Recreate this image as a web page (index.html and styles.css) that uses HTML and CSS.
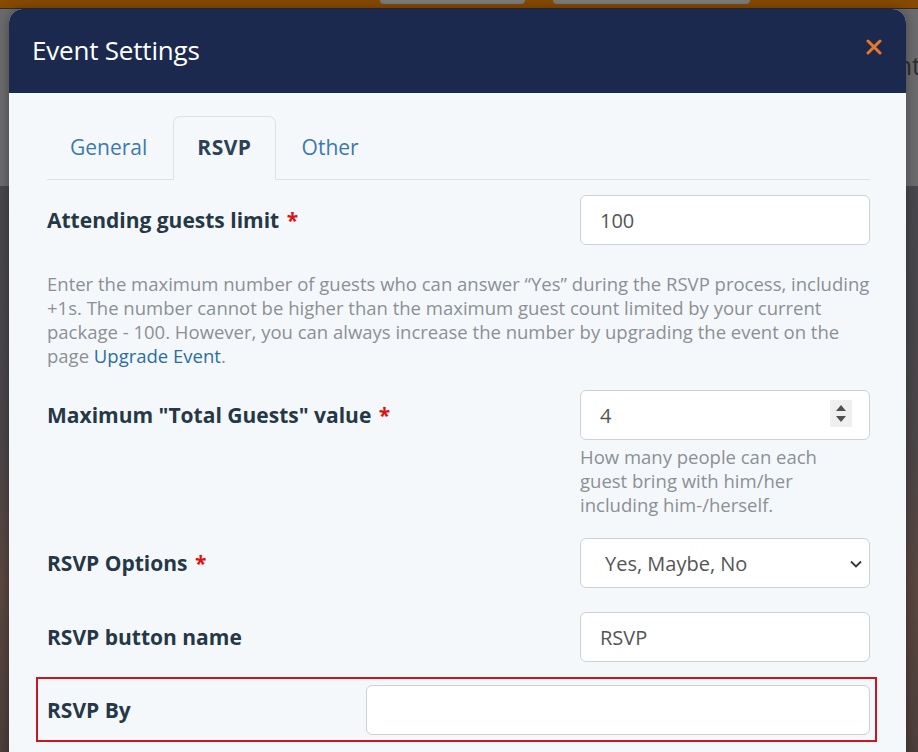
FILE: index.html
```html
<!DOCTYPE html>
<html lang="en">

<head>
    <meta charset="UTF-8">
    <meta name="viewport" content="width=device-width, initial-scale=1.0">
    <title>Event Settings</title>
    <link rel="stylesheet" href="styles.css">
</head>

<body>
    <div class="page">
        <div class="topbar">
            <span class="pill pill-a"></span>
            <span class="pill pill-b"></span>
        </div>
        <div class="page-head">
            <span class="page-title">nt</span>
        </div>
        <div class="page-photo"></div>
    </div>

    <div class="modal">
        <div class="modal-header">
            <h2 class="modal-title">Event Settings</h2>
            <button class="close" type="button" aria-label="Close">
                <svg viewBox="0 0 16 16" width="16" height="16">
                    <path d="M 2,2 14,14 M 14,2 2,14"></path>
                </svg>
            </button>
        </div>

        <div class="modal-body">
            <ul class="tabs">
                <li class="tab"><a href="#">General</a></li>
                <li class="tab active"><a href="#">RSVP</a></li>
                <li class="tab"><a href="#">Other</a></li>
            </ul>

            <div class="form-row row-limit">
                <label class="form-label">Attending guests limit <span class="req">*</span></label>
                <div class="form-field">
                    <input class="form-control" type="text" value="100">
                </div>
            </div>
            <p class="help help-wide">Enter the maximum number of guests who can answer “Yes” during the RSVP process, including +1s. The number cannot be higher than the maximum guest count limited by your current package - 100. However, you can always increase the number by upgrading the event on the page <a href="#">Upgrade Event</a>.</p>

            <div class="form-row row-top">
                <label class="form-label">Maximum "Total Guests" value <span class="req">*</span></label>
                <div class="form-field">
                    <div class="number">
                        <input class="form-control" type="text" value="4">
                        <span class="spin">
                            <svg viewBox="0 0 22 27" width="22" height="27">
                                <path d="M 6,11 11,5 16,11 Z M 6,16 16,16 11,22 Z"></path>
                            </svg>
                        </span>
                    </div>
                    <p class="help help-field">How many people can each guest bring with him/her including him-/herself.</p>
                </div>
            </div>

            <div class="form-row row-options">
                <label class="form-label">RSVP Options <span class="req">*</span></label>
                <div class="form-field">
                    <div class="select">
                        <select class="form-control">
                            <option>Yes, Maybe, No</option>
                            <option>Yes, No</option>
                        </select>
                        <svg class="chevron" viewBox="0 0 12 8" width="12" height="8">
                            <path d="M 1,1.5 6,6.5 11,1.5"></path>
                        </svg>
                    </div>
                </div>
            </div>

            <div class="form-row row-button">
                <label class="form-label">RSVP button name</label>
                <div class="form-field">
                    <input class="form-control" type="text" value="RSVP">
                </div>
            </div>

            <div class="form-row row-by">
                <label class="form-label">RSVP By</label>
                <div class="form-field">
                    <input class="form-control" type="text" value="">
                </div>
            </div>
        </div>
    </div>
</body>

</html>
```

FILE: styles.css
```css
*,
*:before,
*:after {
    box-sizing: border-box;
}

html,
body {
    height: 100%;
}

body {
    margin: 0;
    padding: 0;
    overflow: hidden;
    position: relative;
    font-family: "Open Sans", "Noto Sans", sans-serif;
    background: #3b3b3d;
}

/* page under the dialog (dimmed) */

.page {
    height: 100%;
    display: flex;
    flex-direction: column;
}

.topbar {
    height: 8px;
    background: #874a02;
    display: flex;
    gap: 28px;
    padding-left: 380px;
}

.pill {
    height: 4px;
    background: #7b7b7b;
    border-radius: 0 0 10px 10px;
}

.pill-a {
    width: 145px;
}

.pill-b {
    width: 197px;
}

.page-head {
    height: 178px;
    background: #6b6b6d;
    display: flex;
    justify-content: flex-end;
    align-items: flex-start;
    padding-top: 40px;
    border-top: 1px solid #2e2e30;
}

.page-title {
    font-size: 25px;
    line-height: 32px;
    color: #2e2e2e;
    margin-right: -3px;
}

.page-photo {
    flex: 1;
    background: linear-gradient(180deg, #47474d 0%, #4b4648 45%, #5a4740 70%, #4d3f3b 100%);
}

/* dialog */

.modal {
    position: absolute;
    top: 9px;
    left: 9px;
    width: 897px;
    border-radius: 14px 14px 0 0;
    background: #f5f8fb;
    box-shadow: 0 0 12px rgba(0, 0, 0, 0.35);
    overflow: hidden;
}

.modal-header {
    height: 84px;
    background: #1b294e;
    display: flex;
    align-items: center;
    justify-content: space-between;
    padding: 0 24px 2px 23px;
}

.modal-title {
    margin: 0;
    font-size: 26px;
    font-weight: 400;
    color: #fff;
    letter-spacing: -0.2px;
}

.close {
    border: 0;
    background: transparent;
    padding: 0;
    width: 16px;
    height: 16px;
    cursor: pointer;
    margin-top: -6px;
}

.close svg {
    display: block;
}

.close path {
    stroke: #e8772c;
    stroke-width: 3px;
    stroke-linecap: round;
    fill: none;
}

.modal-body {
    padding: 23px 36px 40px 38px;
}

/* tabs */

.tabs {
    list-style: none;
    margin: 0;
    padding: 0;
    display: flex;
    gap: 2px;
    border-bottom: 1px solid #dde2e7;
}

.tab a {
    height: 64px;
    display: flex;
    align-items: center;
    padding: 0 23px 2px;
    font-size: 21px;
    color: #3c78b0;
    text-decoration: none;
    border: 1px solid transparent;
    border-radius: 7px 7px 0 0;
    margin-bottom: -1px;
}

.tab:first-child a {
    padding-left: 22px;
}

.tab.active a {
    font-weight: 700;
    color: #2b4256;
    border-color: #dde2e7;
    border-bottom-color: #f5f8fb;
    background: #f5f8fb;
    letter-spacing: 0.5px;
}

/* form */

.form-row {
    display: flex;
    align-items: center;
}

.form-label {
    width: 533px;
    flex: none;
    font-size: 21px;
    font-weight: 700;
    color: #253848;
}

.req {
    color: #e01010;
    margin-left: 2px;
}

.form-field {
    flex: 1;
}

.form-control {
    display: block;
    width: 100%;
    height: 50px;
    padding: 0 19px;
    border: 1px solid #cdd2d7;
    border-radius: 6px;
    background: #fff;
    font-family: inherit;
    font-size: 20px;
    color: #555;
    outline: none;
}

.help {
    margin: 0;
    font-size: 18.5px;
    line-height: 24px;
    color: #8a9096;
}

.help a {
    color: #2a6da6;
    text-decoration: none;
}

.row-limit {
    margin-top: 15px;
}

.help-wide {
    margin-top: 27px;
}

.row-top {
    margin-top: 22px;
    align-items: flex-start;
}

.row-top .form-label {
    line-height: 50px;
}

.number {
    position: relative;
}

.spin {
    position: absolute;
    top: 10px;
    right: 18px;
    width: 22px;
    height: 27px;
    background: #efefef;
}

.spin svg {
    display: block;
}

.spin path {
    fill: #505050;
}

.help-field {
    margin-top: 5px;
    padding-right: 20px;
}

.row-options {
    margin-top: 21px;
}

.select {
    position: relative;
}

.select select {
    appearance: none;
    -webkit-appearance: none;
    padding-left: 24px;
}

.chevron {
    position: absolute;
    top: 22px;
    right: 8px;
    pointer-events: none;
}

.chevron path {
    stroke: #333;
    stroke-width: 1.8px;
    fill: none;
}

.row-button {
    margin-top: 24px;
}

.row-by {
    margin: 15px -7px 0 -11px;
    padding: 6px 5px 5px 9px;
    border: 2px solid #c81720;
}

.row-by .form-label {
    width: 319px;
}
```
